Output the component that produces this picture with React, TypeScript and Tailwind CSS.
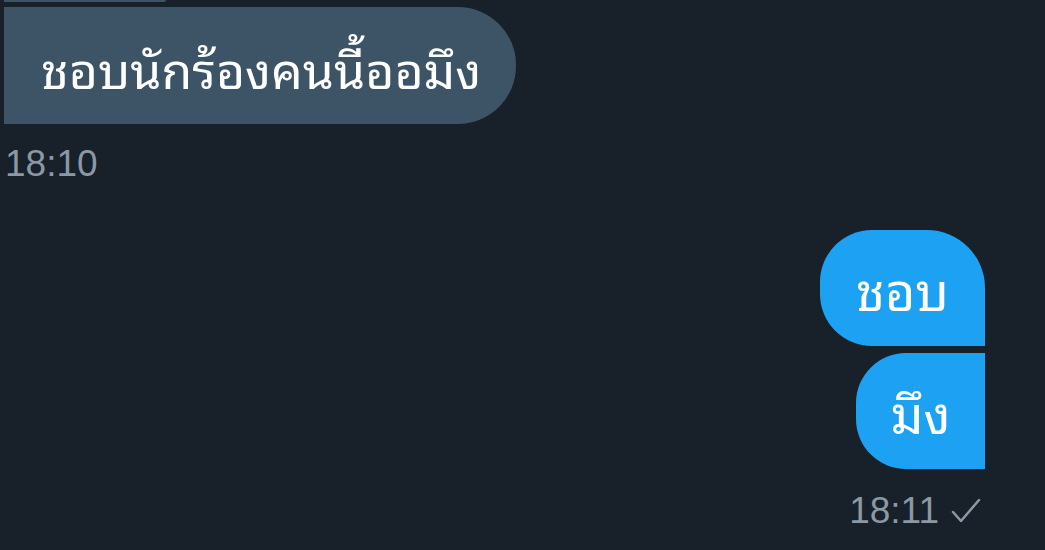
export default function App() {
  const thai = {
    fontFamily: '"Noto Sans Thai Looped", "Loma", "Garuda", "Noto Sans Thai", "Noto Sans", sans-serif',
  };

  return (
    <div
      className="w-[1045px] h-[550px] overflow-hidden bg-[#18202a] flex flex-col"
      style={{ fontFamily: '"Liberation Sans", Arial, sans-serif' }}
    >
      {/* tail of previous message */}
      <div className="shrink-0 ml-[4px] w-[162px] h-[2px] bg-[#3d5466] rounded-br-[6px]" />

      <div className="shrink-0 mt-[5px] ml-[4px] w-[512px] h-[117px] bg-[#3d5466] rounded-r-[58px] flex items-center pl-[37px] pt-[2px]">
        <span className="text-white text-[50px] leading-none" style={thai}>
          ชอบนักร้องคนนี้ออมึง
        </span>
      </div>
      <div className="shrink-0 ml-[5px] mt-[21px] text-[37px] leading-none text-[#8b98a5]">18:10</div>

      <div className="shrink-0 flex flex-col items-end pr-[60px] mt-[48px] gap-[7px]">
        <div className="w-[165px] h-[116px] bg-[#1da1f2] rounded-tl-[52px] rounded-tr-[58px] rounded-bl-[52px] flex items-center justify-center">
          <span className="text-white text-[52px] leading-none" style={thai}>ชอบ</span>
        </div>
        <div className="w-[129px] h-[116px] bg-[#1da1f2] rounded-l-[50px] flex items-center justify-center">
          <span className="text-white text-[52px] leading-none" style={thai}>มึง</span>
        </div>
        <div className="mt-[16px] mr-[4px] flex items-center gap-[12px] text-[37px] leading-none text-[#8b98a5]">
          <span>18:11</span>
          <svg width="30" height="26" viewBox="0 0 30 26" fill="none" stroke="#8b98a5" strokeWidth="2.5" strokeLinecap="round" strokeLinejoin="round">
            <path d="M2 14 L10 23 L28 2" />
          </svg>
        </div>
      </div>
    </div>
  );
}
